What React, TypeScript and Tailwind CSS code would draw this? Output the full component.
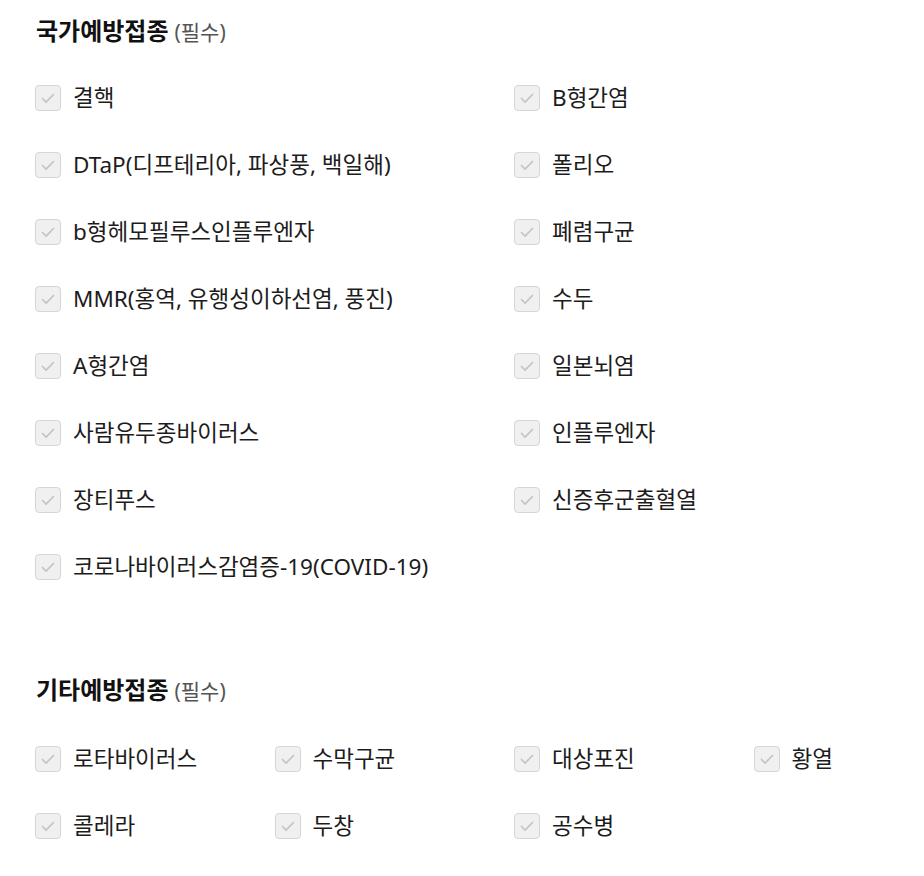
import React from 'react';

const national = [
  '결핵',
  'B형간염',
  'DTaP(디프테리아, 파상풍, 백일해)',
  '폴리오',
  'b형헤모필루스인플루엔자',
  '폐렴구균',
  'MMR(홍역, 유행성이하선염, 풍진)',
  '수두',
  'A형간염',
  '일본뇌염',
  '사람유두종바이러스',
  '인플루엔자',
  '장티푸스',
  '신증후군출혈열',
  '코로나바이러스감염증-19(COVID-19)',
];

const others = ['로타바이러스', '수막구균', '대상포진', '황열', '콜레라', '두창', '공수병'];

const CheckBox: React.FC = () => (
  <span className="flex h-[26px] w-[26px] shrink-0 items-center justify-center rounded-[4px] border border-[#d6d6d6] bg-[#f0f0f0]">
    <svg width="18" height="18" viewBox="0 0 18 18" fill="none">
      <path d="M3.5 9.5l3.6 3.6L14.5 5.5" stroke="#c4c4c4" strokeWidth="1.7" strokeLinecap="round" strokeLinejoin="round" />
    </svg>
  </span>
);

const Item: React.FC<{ label: string }> = ({ label }) => (
  <label className="flex h-[40px] items-center gap-[12px]">
    <CheckBox />
    <span className="whitespace-nowrap text-[22.5px] leading-none text-[#1c1c1c]">{label}</span>
  </label>
);

const Title: React.FC<{ text: string }> = ({ text }) => (
  <h2 className="flex h-[28px] items-baseline gap-[6px] pl-px">
    <span className="text-[24px] font-bold leading-[28px] text-[#111]">{text}</span>
    <span className="text-[21px] leading-[28px] text-[#555]">(필수)</span>
  </h2>
);

export default function App() {
  return (
    <div
      className="w-[924px] overflow-hidden bg-white pl-[35px] pt-[17px]"
      style={{ fontFamily: '"Noto Sans", "Noto Sans CJK KR", sans-serif' }}
    >
      <Title text="국가예방접종" />
      <div className="mt-[33px] grid w-[958px] grid-cols-[479px_479px] gap-y-[27px]">
        {national.map((v) => (
          <Item key={v} label={v} />
        ))}
      </div>
      <div className="mt-[89px]">
        <Title text="기타예방접종" />
      </div>
      <div className="mt-[35px] grid w-[958px] grid-cols-[239.5px_239.5px_239.5px_239.5px] gap-y-[27px] pb-[30px]">
        {others.map((v) => (
          <Item key={v} label={v} />
        ))}
      </div>
    </div>
  );
}
